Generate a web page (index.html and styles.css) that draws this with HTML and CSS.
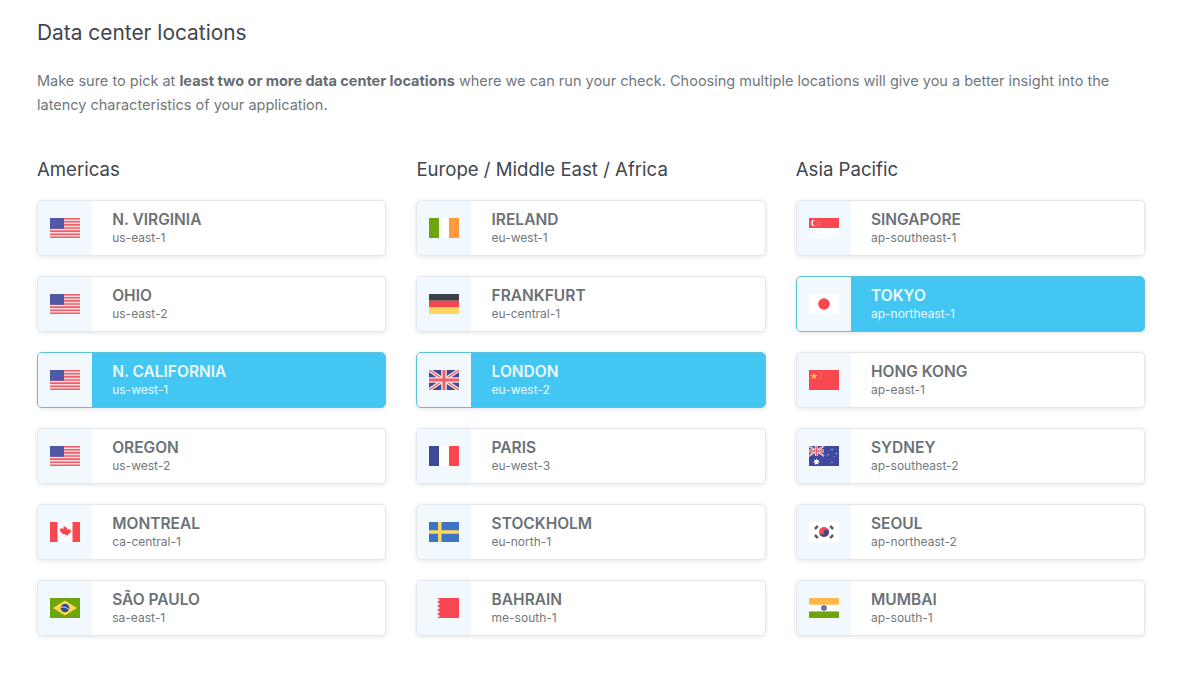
FILE: index.html
```html
<!DOCTYPE html>
<html lang="en">
<head>
    <meta charset="UTF-8">
    <title>Data center locations</title>
    <link rel="stylesheet" href="styles.css">
</head>
<body>

<!-- flag sprites, all 30x20 -->
<svg class="sprites" xmlns="http://www.w3.org/2000/svg">
    <defs>
        <pattern id="stars" width="2" height="2" patternUnits="userSpaceOnUse">
            <rect width="2" height="2" fill="#3f4a9e"/>
            <rect x="0.5" y="0.5" width="0.9" height="0.9" fill="#8f96d0"/>
        </pattern>
    </defs>
    <symbol id="flag-us" viewBox="0 0 30 20">
        <rect width="30" height="20" fill="#f6d9db"/>
        <path d="M0 0h30v1.600H0zM0 3h30v1.600H0zM0 6.100h30v1.600H0zM0 9.200h30v1.600H0zM0 12.300h30v1.600H0zM0 15.400h30v1.600H0zM0 18.400h30V20H0z" fill="#ef5f6b"/>
        <rect width="14" height="10.800" fill="url(#stars)"/>
    </symbol>
    <symbol id="flag-ca" viewBox="0 0 30 20">
        <rect width="30" height="20" fill="#fff"/>
        <rect width="7.500" height="20" fill="#f8474f"/>
        <rect x="22.500" width="7.500" height="20" fill="#f8474f"/>
        <path d="M15 3.500l1.300 2.400 1.200-.6-.5 3 1.700-1.600.4 1 2-.3-.6 2 .8.5-3 2.400.3 1.200-3-.4V15h-.4v-2.900l-3 .4.3-1.200-3-2.400.8-.5-.6-2 2 .3.4-1 1.700 1.600-.5-3 1.200.6z" fill="#f8474f"/>
    </symbol>
    <symbol id="flag-br" viewBox="0 0 30 20">
        <rect width="30" height="20" fill="#6da50c"/>
        <path d="M15 2.500L27 10 15 17.500 3 10z" fill="#ffda44"/>
        <circle cx="15" cy="10" r="4.300" fill="#324a9c"/>
        <path d="M11 9.200c3-.6 6 .3 7.800 2.200" stroke="#e8eaf4" stroke-width=".9" fill="none"/>
    </symbol>
    <symbol id="flag-ie" viewBox="0 0 30 20">
        <rect width="30" height="20" fill="#fff"/>
        <rect width="10" height="20" fill="#6da50c"/>
        <rect x="20" width="10" height="20" fill="#ff9a3e"/>
    </symbol>
    <symbol id="flag-de" viewBox="0 0 30 20">
        <rect width="30" height="6.700" fill="#3a4149"/>
        <rect y="6.700" width="30" height="6.700" fill="#f6474f"/>
        <rect y="13.400" width="30" height="6.600" fill="#ffd75e"/>
    </symbol>
    <symbol id="flag-gb" viewBox="0 0 30 20">
        <rect width="30" height="20" fill="#3f4a8e"/>
        <path d="M0 0l30 20M30 0L0 20" stroke="#f7e6ea" stroke-width="3.600"/>
        <path d="M0 0l30 20M30 0L0 20" stroke="#ef5f6b" stroke-width="1.300"/>
        <path d="M15 0v20M0 10h30" stroke="#f7e6ea" stroke-width="5.500"/>
        <path d="M15 0v20M0 10h30" stroke="#ef5f6b" stroke-width="2.800"/>
    </symbol>
    <symbol id="flag-fr" viewBox="0 0 30 20">
        <rect width="30" height="20" fill="#fff"/>
        <rect width="10" height="20" fill="#3f4a94"/>
        <rect x="20" width="10" height="20" fill="#f8474f"/>
    </symbol>
    <symbol id="flag-se" viewBox="0 0 30 20">
        <rect width="30" height="20" fill="#3f74c4"/>
        <path d="M9 0h3.500v20H9zM0 8.300h30v3.400H0z" fill="#ffd75e"/>
    </symbol>
    <symbol id="flag-bh" viewBox="0 0 30 20">
        <path d="M30 0v20H8l3-2-3-2 3-2-3-2 3-2-3-2 3-2-3-2 3-2-3-2z" fill="#f8474f"/>
    </symbol>
    <symbol id="flag-sg" viewBox="0 0 30 20">
        <rect width="30" height="20" fill="#fafdff"/>
        <rect width="30" height="10" fill="#f8474f"/>
        <circle cx="5.500" cy="5" r="3.300" fill="#fff"/>
        <circle cx="6.800" cy="5" r="3" fill="#f8474f"/>
        <path d="M8.300 2.800h.8v.8h-.8zM10.800 4.200h.8v.8h-.8zM7.500 5.700h.8v.8h-.8zM10 6.700h.8v.8H10zM9.700 4.200h.6v.6h-.6z" fill="#fff"/>
    </symbol>
    <symbol id="flag-jp" viewBox="0 0 30 20">
        <rect width="30" height="20" fill="#fff"/>
        <circle cx="15" cy="10" r="5.800" fill="#f8474f"/>
    </symbol>
    <symbol id="flag-cn" viewBox="0 0 30 20">
        <rect width="30" height="20" fill="#f8474f"/>
        <path d="M5 2.200l1 2.600 2.800.1-2.200 1.700.8 2.700L5 7.700 2.600 9.300l.8-2.700-2.200-1.700 2.800-.1z" fill="#ffb84a"/>
        <path d="M10.300 2h1v1h-1zM12 4h1v1h-1zM12 6.300h1v1h-1zM10.300 8.300h1v1h-1z" fill="#ffb84a"/>
    </symbol>
    <symbol id="flag-au" viewBox="0 0 30 20">
        <rect width="30" height="20" fill="#3f4a9e"/>
        <path d="M0 0l15 10M15 0L0 10" stroke="#f7e6ea" stroke-width="2"/>
        <path d="M0 0l15 10M15 0L0 10" stroke="#ef5f6b" stroke-width=".8"/>
        <path d="M7.500 0v10M0 5h15" stroke="#f7e6ea" stroke-width="3"/>
        <path d="M7.500 0v10M0 5h15" stroke="#ef5f6b" stroke-width="1.600"/>
        <path d="M7.500 12.500l.8 1.700 1.800-.4-.7 1.700 1.400 1.100-1.800.4v1.800l-1.500-1.100-1.500 1.100v-1.800l-1.800-.4 1.400-1.100-.7-1.700 1.800.4z" fill="#fff"/>
        <path d="M22.500 3h1v1h-1zM22.500 15.500h1v1h-1zM18.500 8.300h1v1h-1zM27 7h1v1h-1zM24.700 10.500h.7v.7h-.7z" fill="#fff"/>
    </symbol>
    <symbol id="flag-kr" viewBox="0 0 30 20">
        <rect width="30" height="20" fill="#fff"/>
        <circle cx="15" cy="10" r="5" fill="#f8474f"/>
        <path d="M10 10a2.500 2.500 0 0 0 5 0 2.500 2.500 0 0 1 5 0 5 5 0 0 1-10 0z" fill="#3f4a8e"/>
        <path d="M5 6l3-3 1.700 1.900-3 3zM20.300 4.900L22 3l3 3-1.700 1.900zM5 14l1.700-1.900 3 3L8 17zM20.300 15.100l3-3L25 14l-3 3z" fill="#5a6068"/>
    </symbol>
    <symbol id="flag-in" viewBox="0 0 30 20">
        <rect width="30" height="20" fill="#fff"/>
        <rect width="30" height="6.700" fill="#ffb64a"/>
        <rect y="13.400" width="30" height="6.600" fill="#6da50c"/>
        <circle cx="15" cy="10" r="2.700" fill="#4a5590"/>
        <circle cx="15" cy="10" r="1" fill="#aab0dc"/>
    </symbol>
</svg>

<main class="page">
    <h1 class="title">Data center locations</h1>
    <p class="intro">Make sure to pick at <strong>least two or more data center locations</strong> where we can run your check. Choosing multiple locations will give you a better insight into the latency characteristics of your application.</p>

    <div class="regions">
        <section class="region">
            <h2>Americas</h2>
            <div class="loc">
                <span class="loc-flag"><svg><use href="#flag-us"/></svg></span>
                <span class="loc-text"><b>N. Virginia</b><small>us-east-1</small></span>
            </div>
            <div class="loc">
                <span class="loc-flag"><svg><use href="#flag-us"/></svg></span>
                <span class="loc-text"><b>Ohio</b><small>us-east-2</small></span>
            </div>
            <div class="loc selected">
                <span class="loc-flag"><svg><use href="#flag-us"/></svg></span>
                <span class="loc-text"><b>N. California</b><small>us-west-1</small></span>
            </div>
            <div class="loc">
                <span class="loc-flag"><svg><use href="#flag-us"/></svg></span>
                <span class="loc-text"><b>Oregon</b><small>us-west-2</small></span>
            </div>
            <div class="loc">
                <span class="loc-flag"><svg><use href="#flag-ca"/></svg></span>
                <span class="loc-text"><b>Montreal</b><small>ca-central-1</small></span>
            </div>
            <div class="loc">
                <span class="loc-flag"><svg><use href="#flag-br"/></svg></span>
                <span class="loc-text"><b>São Paulo</b><small>sa-east-1</small></span>
            </div>
        </section>

        <section class="region">
            <h2>Europe / Middle East / Africa</h2>
            <div class="loc">
                <span class="loc-flag"><svg><use href="#flag-ie"/></svg></span>
                <span class="loc-text"><b>Ireland</b><small>eu-west-1</small></span>
            </div>
            <div class="loc">
                <span class="loc-flag"><svg><use href="#flag-de"/></svg></span>
                <span class="loc-text"><b>Frankfurt</b><small>eu-central-1</small></span>
            </div>
            <div class="loc selected">
                <span class="loc-flag"><svg><use href="#flag-gb"/></svg></span>
                <span class="loc-text"><b>London</b><small>eu-west-2</small></span>
            </div>
            <div class="loc">
                <span class="loc-flag"><svg><use href="#flag-fr"/></svg></span>
                <span class="loc-text"><b>Paris</b><small>eu-west-3</small></span>
            </div>
            <div class="loc">
                <span class="loc-flag"><svg><use href="#flag-se"/></svg></span>
                <span class="loc-text"><b>Stockholm</b><small>eu-north-1</small></span>
            </div>
            <div class="loc">
                <span class="loc-flag"><svg><use href="#flag-bh"/></svg></span>
                <span class="loc-text"><b>Bahrain</b><small>me-south-1</small></span>
            </div>
        </section>

        <section class="region">
            <h2>Asia Pacific</h2>
            <div class="loc">
                <span class="loc-flag"><svg><use href="#flag-sg"/></svg></span>
                <span class="loc-text"><b>Singapore</b><small>ap-southeast-1</small></span>
            </div>
            <div class="loc selected">
                <span class="loc-flag"><svg><use href="#flag-jp"/></svg></span>
                <span class="loc-text"><b>Tokyo</b><small>ap-northeast-1</small></span>
            </div>
            <div class="loc">
                <span class="loc-flag"><svg><use href="#flag-cn"/></svg></span>
                <span class="loc-text"><b>Hong Kong</b><small>ap-east-1</small></span>
            </div>
            <div class="loc">
                <span class="loc-flag"><svg><use href="#flag-au"/></svg></span>
                <span class="loc-text"><b>Sydney</b><small>ap-southeast-2</small></span>
            </div>
            <div class="loc">
                <span class="loc-flag"><svg><use href="#flag-kr"/></svg></span>
                <span class="loc-text"><b>Seoul</b><small>ap-northeast-2</small></span>
            </div>
            <div class="loc">
                <span class="loc-flag"><svg><use href="#flag-in"/></svg></span>
                <span class="loc-text"><b>Mumbai</b><small>ap-south-1</small></span>
            </div>
        </section>
    </div>
</main>

</body>
</html>
```
FILE: styles.css
```css
body {
    font-family: 'Inter', 'Liberation Sans', sans-serif;
    background-color: #fff;
    margin: 0;
    padding: 0;
}
/* hidden sprite sheet: display none would break the pattern fill */
.sprites {
    position: absolute;
    width: 0;
    height: 0;
}
.page {
    padding: 19px 33px 0 37px;
}
.title {
    margin: 0;
    font-size: 20.9px;
    line-height: 27px;
    font-weight: 400;
    color: #3f464e;
}
.intro {
    margin: 23px 0 0;
    font-size: 14.5px;
    line-height: 24px;
    color: #71777c;
}
.intro strong {
    font-weight: 700;
    color: #666c72;
}
.regions {
    display: grid;
    grid-template-columns: repeat(3, 349.4px);
    gap: 30px;
    margin-top: 39px;
}
.region h2 {
    margin: 0 0 18px;
    font-size: 18.6px;
    line-height: 26px;
    font-weight: 400;
    color: #3f464e;
}
.loc {
    display: flex;
    height: 56px;
    box-sizing: border-box;
    margin-bottom: 20px;
    background: #fff;
    border: 1px solid #e4e7eb;
    border-radius: 5px;
    box-shadow: 0 1px 4px rgba(60, 70, 80, 0.14);
    overflow: hidden;
}
.loc-flag {
    display: flex;
    align-items: center;
    justify-content: center;
    width: 54px;
    flex: none;
    background: #f1f8fe;
}
.loc-flag svg {
    width: 30px;
    height: 20px;
}
.loc-text {
    display: flex;
    flex-direction: column;
    justify-content: center;
    padding-left: 20.2px;
    color: #6b7277;
}
.loc-text b {
    font-size: 15.5px;
    line-height: 19px;
    font-weight: 600;
    text-transform: uppercase;
}
.loc-text small {
    font-size: 12px;
    line-height: 17px;
    color: #72787c;
}
.selected {
    background: #43c6f1;
    border-color: #5cc3dc;
}
.selected .loc-text,
.selected .loc-text small {
    color: #eafaff;
}
```
